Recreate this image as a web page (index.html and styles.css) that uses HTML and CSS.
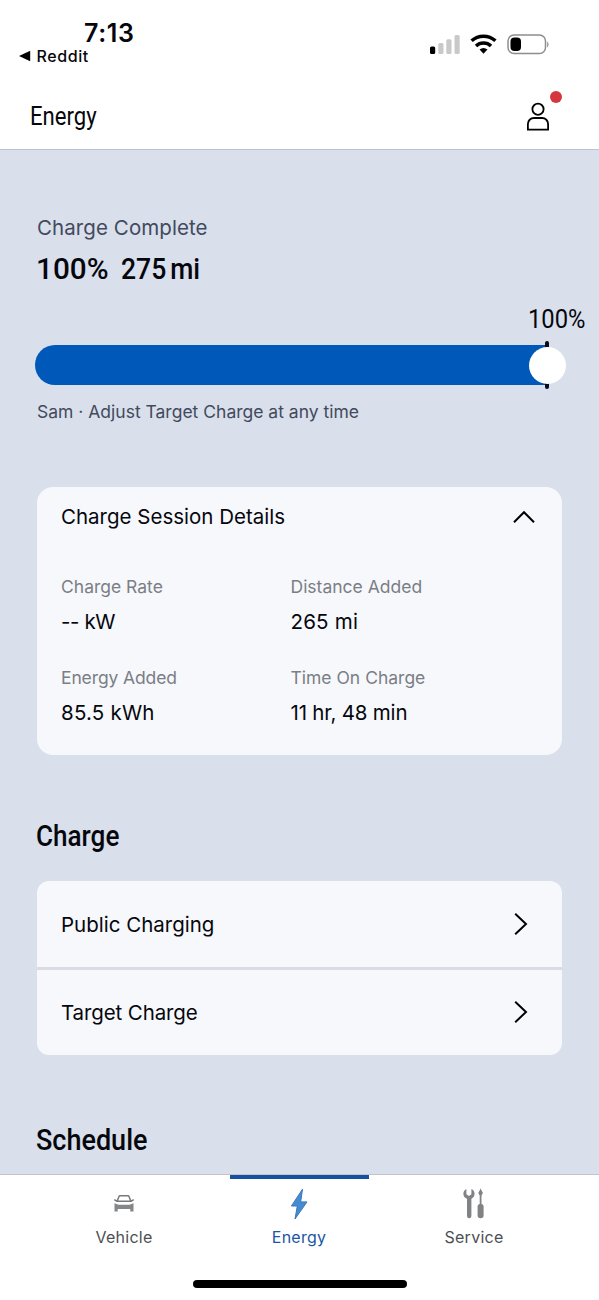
FILE: index.html
```html
<!DOCTYPE html>
<html lang="en">
<head>
<meta charset="utf-8">
<title>Energy</title>
<link rel="stylesheet" href="styles.css">
</head>
<body>
<div class="screen">
  <header class="header">
    <div class="status">
      <div class="status-left">
        <div class="time">7:13</div>
        <div class="back"><svg width="12" height="12" viewBox="0 0 12 12"><path d="M0 6 11.2 0.800V11.200Z"/></svg><span>Reddit</span></div>
      </div>
      <svg class="status-icons" width="122" height="24" viewBox="0 0 122 24">
        <rect x="1" y="14.500" width="5.200" height="7.500" rx="1.600"/>
        <g fill="#c9c9c9"><rect x="9.300" y="11" width="5.200" height="11" rx="1.500"/><rect x="17.300" y="7.200" width="5.200" height="14.800" rx="1.500"/><rect x="25.500" y="3" width="5.200" height="19" rx="1.500"/></g>
        <g fill="none" stroke="#000" stroke-width="3.500"><path d="M42.600 8.800a17.500 17.500 0 0 1 23.800 0"/><path d="M47 14a11 11 0 0 1 15 0"/></g>
        <path d="M50.500 17.600a6.300 6.300 0 0 1 8 0L54.500 21.700Z"/>
        <rect x="79" y="3" width="37.500" height="18.500" rx="6" fill="none" stroke="#8d8d8d" stroke-width="1.500"/>
        <rect x="81.500" y="5.500" width="10.500" height="13.500" rx="4"/>
        <path d="M118.200 9.500a4 4 0 0 1 0 6Z" fill="#8d8d8d"/>
      </svg>
    </div>
    <div class="titlebar">
      <h1 class="title"><span class="condensed">Energy</span></h1>
      <div class="profile">
        <svg width="24" height="30" viewBox="0 0 24 30" fill="none" stroke="#000" stroke-width="1.800"><circle cx="12" cy="7.200" r="5.600"/><path d="M1.900 27.600V22a6 6 0 0 1 6-6h8.200a6 6 0 0 1 6 6v5.600Z"/></svg>
        <i class="dot"></i>
      </div>
    </div>
  </header>
  <main class="main">
    <p class="state">Charge Complete</p>
    <p class="level"><span class="condensed percent">100%</span><span class="condensed range">275 mi</span></p>
    <p class="target"><span class="condensed">100%</span></p>
    <div class="bar"><i class="tick"></i><i class="knob"></i></div>
    <p class="hint">Sam · Adjust Target Charge at any time</p>
    <section class="card details">
      <div class="details-head"><span>Charge Session Details</span>
        <svg width="24" height="14" viewBox="0 0 24 14" fill="none" stroke="#000" stroke-width="2"><path d="M2 12.300 12 2.200 22 12.300"/></svg></div>
      <dl class="stats">
        <div class="stat"><dt>Charge Rate</dt><dd class="rate">-- kW</dd></div>
        <div class="stat"><dt>Distance Added</dt><dd class="distance">265 mi</dd></div>
        <div class="stat"><dt class="tight">Energy Added</dt><dd class="energy">85.5 kWh</dd></div>
        <div class="stat"><dt>Time On Charge</dt><dd class="time-on">11 hr, 48 min</dd></div>
      </dl>
    </section>
    <h2 class="heading"><span class="condensed">Charge</span></h2>
    <section class="card list">
      <div class="row"><span>Public Charging</span><svg width="14" height="24" viewBox="0 0 14 24" fill="none" stroke="#000" stroke-width="2"><path d="M1.200 1.800 12 12 1.200 22.200"/></svg></div>
      <div class="row"><span class="tight">Target Charge</span><svg width="14" height="24" viewBox="0 0 14 24" fill="none" stroke="#000" stroke-width="2"><path d="M1.200 1.800 12 12 1.200 22.200"/></svg></div>
    </section>
    <h2 class="heading schedule"><span class="condensed">Schedule</span></h2>
  </main>
  <nav class="nav">
    <div class="tab">
      <svg width="36" height="36" viewBox="0 0 36 36"><path d="M11.200 15 13 10.500Q13.300 9.800 14 9.800h8q.7 0 1 .7L24.800 15M8.300 13.700l2.500 1.500h14.400l2.500-1.500" fill="none" stroke="#77797b" stroke-width="1.500"/><path d="M8.500 17.200l4 1.600h11l4-1.600v8.300h-3.200v-2.500h-12.600v2.500h-3.200Z" fill="#848688"/></svg>
      <span>Vehicle</span>
    </div>
    <div class="tab active">
      <svg width="36" height="36" viewBox="0 0 36 36"><path d="M21.500 3.200 10.400 20h5.900L14 33 26 15.900h-6.300Z" fill="#468bd0" stroke="#3878bd" stroke-width="1"/></svg>
      <span>Energy</span>
    </div>
    <div class="tab">
      <svg width="36" height="36" viewBox="0 0 36 36" fill="#808284"><path d="M10.400 3v5.200l2.500 1.800 2.500-1.800v-5.200a5.300 5.300 0 0 1 0 9.700V30a2.200 2.200 0 0 1-4.400 0V12.800a5.300 5.300 0 0 1-.6-9.800Z"/><path d="M24.600 2.500l2.300 4.500-1.400 2.500v8.500c2.100.5 2.300 2 2.100 4v7.500a3 2.700 0 0 1-6 0v-7.500c-.2-2 0-3.500 2.100-4v-8.500l-1.400-2.500Z"/></svg>
      <span>Service</span>
    </div>
    <i class="home"></i>
  </nav>
</div>
</body>
</html>
```
FILE: styles.css
```css
* { box-sizing: border-box; margin: 0; padding: 0; }
body { font-family: Inter, "Liberation Sans", sans-serif; color: #06070d; background: #fff; }
.screen { width: 599px; height: 1300px; display: flex; flex-direction: column; overflow: hidden; }
.condensed { display: inline-block; white-space: pre; transform-origin: left center; }
svg { display: block; flex: none; }

.header { height: 150px; border-bottom: 1px solid #bcc3ce; background: #fff; }
.status { height: 80px; padding: 18px 48px 0 19px; display: flex; justify-content: space-between; }
.time { height: 30px; line-height: 30px; font-size: 25px; font-weight: 600; letter-spacing: 0.6px; padding-left: 65px; }
.back { height: 16px; line-height: 16px; font-size: 16px; font-weight: 500; letter-spacing: 0.6px; display: flex; align-items: center; gap: 5.5px; }
.status-icons { margin-top: 14px; }
.titlebar { height: 69px; padding: 4px 49px 0 30px; display: flex; align-items: center; justify-content: space-between; }
.title { font: 400 25px/30px Roboto, sans-serif; }
.title .condensed { transform: scaleX(0.885); }
.profile { position: relative; }
.dot { position: absolute; left: 24px; top: -11px; width: 12px; height: 12px; border-radius: 50%; background: #d5373f; }

.main { height: 1024px; padding: 66px 37px 0; background: #d9dfeb; overflow: hidden; }
.state { font-size: 20.5px; line-height: 24px; letter-spacing: 0.08px; color: #424a5d; }
.level { margin-top: 11px; font: 500 30px/36px Roboto, sans-serif; display: flex; }
.percent { transform: translateX(-1px) scaleX(0.99); }
.range { margin-left: 11px; word-spacing: -3px; transform: scaleX(0.885); }
.target { margin: 18px -30px 0 0; padding-left: 490.500px; font: 400 25px/30px Roboto, sans-serif; }
.target .condensed { transform: scaleX(0.95); }
.bar { position: relative; height: 40px; width: 512px; margin: 10px 0 0 -2px; border-radius: 20px 0 0 20px; background: #0058b8; }
.tick { position: absolute; left: 510px; top: -4px; width: 4px; height: 48px; border-radius: 2px; background: #080b18; }
.knob { position: absolute; left: 493.500px; top: 1.500px; width: 37px; height: 37px; border-radius: 50%; background: #fff; }
.hint { margin-top: 16px; font-size: 17.5px; line-height: 22px; color: #424a5d; }
.card { background: #f6f8fc; }
.details { margin-top: 64px; height: 268px; border-radius: 16px; padding: 18px 24px 0; }
.details-head { height: 24px; line-height: 24px; font-size: 20.5px; display: flex; justify-content: space-between; align-items: center; }
.details-head svg { margin-right: 2px; }
.stats { margin-top: 47px; display: grid; grid-template-columns: 229.5px 1fr; row-gap: 33px; }
.stat dt { font-size: 17.5px; line-height: 22px; color: #7b7e85; }
.stat dd { margin-top: 12px; font-size: 20.5px; line-height: 24px; }
.stat .tight, .row .tight { letter-spacing: -0.12px; }
.stat .rate { letter-spacing: -0.4px; }
.stat .distance, .stat .energy { letter-spacing: 0.2px; }
.stat .time-on { letter-spacing: -0.2px; }
.heading { margin-top: 63px; font: 500 30px/36px Roboto, sans-serif; }
.heading .condensed { transform: translateX(-1px) scaleX(0.87); }
.list { margin-top: 27px; height: 174px; border-radius: 12px; overflow: hidden; }
.row { height: 86px; padding: 0 34px 0 24px; display: flex; justify-content: space-between; align-items: center; font-size: 20.5px; }
.row + .row { height: 88px; padding-bottom: 1px; border-top: 3px solid #d9dce2; }
.schedule { margin-top: 67px; }
.schedule .condensed { transform: translateX(-1px) scaleX(0.9); }

.nav { position: relative; height: 126px; padding: 0 36.5px; border-top: 1px solid #c1c4cc; display: flex; background: #fff; }
.tab { width: 175px; display: flex; flex-direction: column; align-items: center; padding-top: 11px; font-size: 16px; line-height: 20px; letter-spacing: 0.25px; color: #4c4f52; }
.tab svg { margin-bottom: 5px; }
.active { color: #1b56a5; background: linear-gradient(#1750a3, #1750a3) center top / 139px 4px no-repeat; }
.home { position: absolute; left: 193px; top: 105px; width: 214px; height: 8px; border-radius: 4px; background: #000; }
```
